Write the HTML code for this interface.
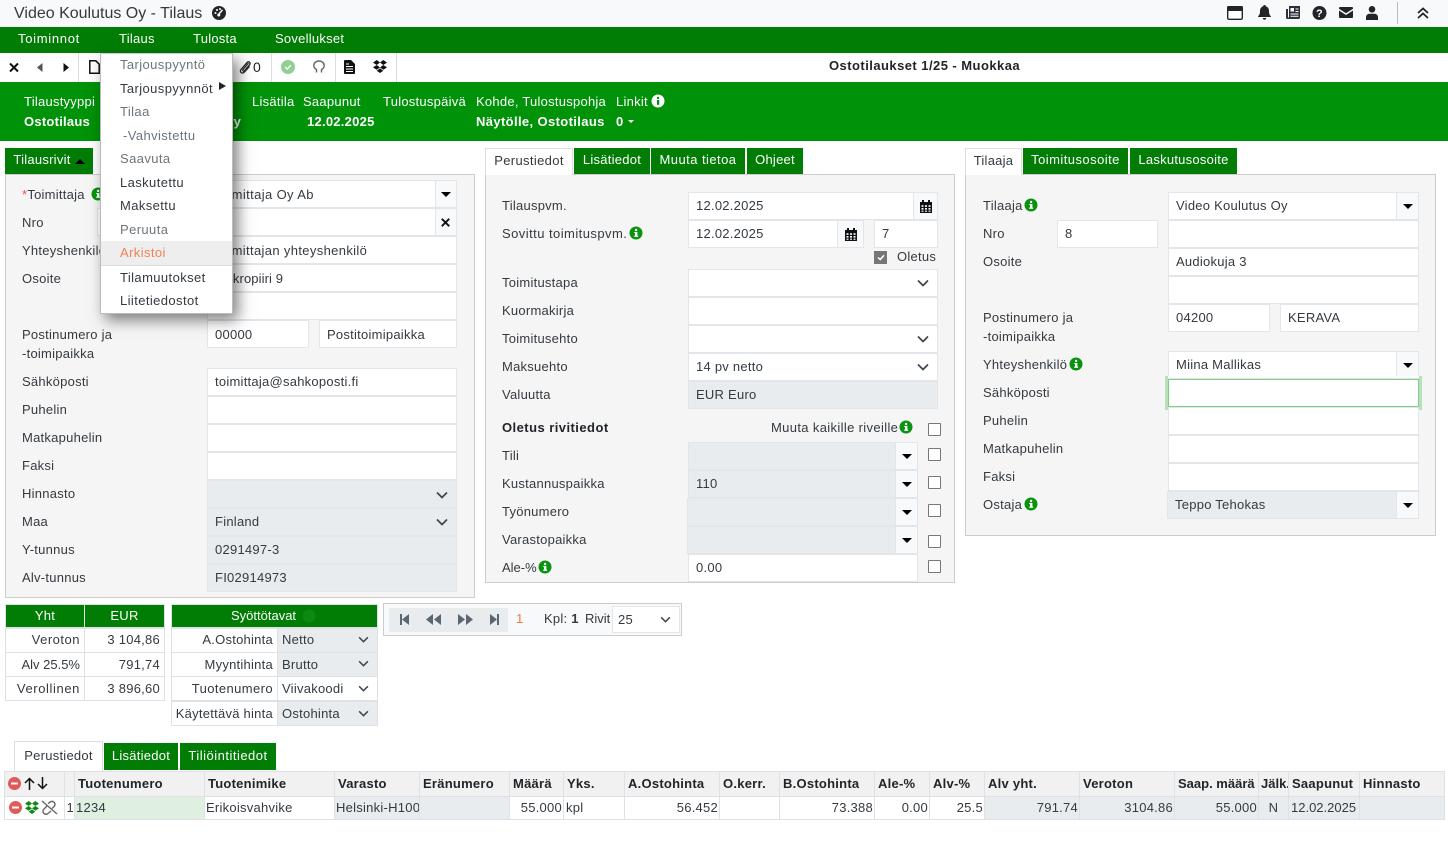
<!DOCTYPE html>
<html lang="fi"><head><meta charset="utf-8"><title>Video Koulutus Oy - Tilaus</title>
<style>
html,body{margin:0;padding:0;width:1448px;height:861px;overflow:hidden;background:#fff}
body{font-family:"Liberation Sans","DejaVu Sans",sans-serif;font-size:13px;letter-spacing:.25px;color:#343a40;position:relative}
.a,.t,.f,.g,.b,.p,.tab{position:absolute;box-sizing:border-box}
.t{line-height:18px;white-space:nowrap}
.t:not(.w){margin-top:1px}
.w{color:#fff}.bd{font-weight:bold}
.f,.g{background:#fff;border:1px solid #e2e5e9;height:28px;line-height:26px;padding-left:7px;white-space:nowrap;overflow:hidden}
.g{background:#e9ecef}
.b{background:#f8f9fa;border:1px solid #e2e5e9;height:28px}
.b i{position:absolute;left:50%;top:50%;margin:-2px 0 0 -5px;border:5px solid transparent;border-top:5px solid #000;border-bottom:0}
.p{background:#f5f5f5;border:1px solid #ccc}
.tab{height:26px;line-height:24px;text-align:center;background:#017d06;color:#fff;top:148px}
.tab.on{background:#fff;color:#343a40;border:1px solid #ddd;border-bottom:0;height:27px}
svg{position:absolute;overflow:visible}
.cb{position:absolute;width:13px;height:13px;border:1px solid #777;background:#fff;box-sizing:border-box;border-radius:1px}
.m{position:absolute;left:120px;margin-top:1px;line-height:18px;white-space:nowrap;color:#6c757d;letter-spacing:.4px}
.m.k{color:#343a40}
.c{position:absolute;box-sizing:border-box;border:1px solid #dee2e6;height:25px;line-height:23px;padding:0 4px;white-space:nowrap;background:#fff;overflow:hidden}
.r{text-align:right}
.h{background:#017d06;color:#fff;text-align:center;height:24px;line-height:21px}
.hd{background:#f1f1f1;font-weight:bold;top:771px;height:26px;line-height:24px;color:#212529;padding:0 3px}
.rw{top:796px;height:24px;line-height:22px;color:#343a40;padding:0 1px}
.gg{background:#e9ecef}
</style></head><body>
<svg width="0" height="0" style="position:absolute"><defs>
<symbol id="inf" viewBox="0 0 14 14"><circle cx="7" cy="7" r="6.5" fill="#0a930f"/><rect x="6" y="6" width="2.4" height="4.6" fill="#fff"/><rect x="5.2" y="9.6" width="3.9" height="1.2" fill="#fff"/><rect x="5.2" y="6" width="2" height="1" fill="#fff"/><circle cx="7.1" cy="4" r="1.2" fill="#fff"/></symbol>
<symbol id="chev" viewBox="0 0 12 8"><path d="M1 1.5 6 6.5 11 1.5" fill="none" stroke="#3f464d" stroke-width="1.7"/></symbol>
<symbol id="cal" viewBox="0 0 12 13"><path d="M0 2h2V0h2v2h4V0h2v2h2v11H0z" fill="#111"/><path d="M1.5 5.3h2v1.6h-2zM5 5.3h2v1.6H5zM8.500 5.300h2v1.600h-2zM1.500 8h2v1.600h-2zM5 8h2v1.600H5zM8.500 8h2v1.600h-2zM1.500 10.600h2v1.200h-2zM5 10.600h2v1.200H5zM8.500 10.600h2v1.200h-2z" fill="#fff"/></symbol>
<symbol id="drop" viewBox="0 0 14 13"><path d="M3.700 0 7 2.500 3.700 5 0 2.600zM10.300 0 14 2.600 10.300 5 7 2.500zM0 7.400 3.700 5 7 7.400 3.700 9.800zM14 7.400 10.300 9.800 7 7.400 10.300 5zM3.700 10.700 7 8.400l3.300 2.300-3.300 2.300z"/></symbol>
</defs></svg>

<!-- Title bar -->
<div class="a" style="left:0;top:0;width:1448px;height:27px;background:#f8f9fa"></div>
<div class="t" style="left:14px;top:2px;font-size:16px;line-height:21px;letter-spacing:0;color:#343a40">Video Koulutus Oy - Tilaus</div>
<svg style="left:212px;top:6px" width="14" height="14" viewBox="0 0 14 14"><circle cx="7" cy="7" r="7" fill="#212529"/><path d="M7 8 10.500 3.800" stroke="#fff" stroke-width="1.500"/><circle cx="3.500" cy="7" r="1" fill="#fff"/><circle cx="5" cy="4" r="1" fill="#fff"/><circle cx="8" cy="3" r="1" fill="#fff"/><circle cx="6.800" cy="9" r="1.500" fill="#fff"/></svg>
<svg style="left:1227px;top:6px" width="16" height="14" viewBox="0 0 16 14"><rect x=".7" y=".7" width="14.600" height="12.600" rx="1.500" fill="#fff" stroke="#212529" stroke-width="1.400"/><rect x="0" y="0" width="16" height="5" rx="1.500" fill="#212529"/></svg>
<svg style="left:1258px;top:5px" width="13" height="15" viewBox="0 0 13 15"><path d="M6.500 0c1 0 1.300.7 1.300 1.400C10 2 11 3.800 11 6c0 3 .8 4.300 2 5.500V12H0v-.5C1.200 10.300 2 9 2 6c0-2.200 1-4 3.200-4.600C5.200.7 5.500 0 6.500 0z" fill="#212529"/><path d="M4.800 13h3.400a1.700 1.700 0 0 1-3.400 0z" fill="#212529"/></svg>
<svg style="left:1286px;top:6px" width="14" height="13" viewBox="0 0 14 13"><path d="M3 0h11v11.500a1.500 1.500 0 0 1-1.500 1.500H1.500A1.500 1.500 0 0 1 0 11.500V3h2v8.500h1z" fill="#2b3138"/><path d="M4.500 2h3.500v3.500H4.500zM9.500 2.500H12.500V3.500H9.500zM9.500 5H12.500V6H9.500zM4.500 7.500H12.500V8.500H4.500zM4.500 9.800H12.500V10.800H4.500z" fill="#fff"/></svg>
<svg style="left:1312px;top:6px" width="15" height="14" viewBox="0 0 15 14"><circle cx="7.500" cy="7" r="7" fill="#212529"/><text x="7.500" y="11" font-family="Liberation Sans" font-size="11" font-weight="bold" text-anchor="middle" fill="#fff">?</text></svg>
<svg style="left:1339px;top:7px" width="14" height="11" viewBox="0 0 14 11"><path d="M1 0h12a1 1 0 0 1 1 1v.8L7 6.300 0 1.800V1a1 1 0 0 1 1-1zM0 3.500 7 8l7-4.500V10a1 1 0 0 1-1 1H1a1 1 0 0 1-1-1z" fill="#212529"/></svg>
<svg style="left:1366px;top:6px" width="12" height="14" viewBox="0 0 12 14"><circle cx="6" cy="3.300" r="3.300" fill="#212529"/><path d="M0 14v-2.500C0 9 2 7.800 3.500 7.800h5C10 7.800 12 9 12 11.500V14z" fill="#212529"/></svg>
<div class="a" style="left:1397px;top:2px;width:1px;height:22px;background:#bbb"></div>
<svg style="left:1417px;top:7px" width="12" height="12" viewBox="0 0 12 12"><path d="M1 6 6 1.500 11 6M1 11 6 6.500 11 11" fill="none" stroke="#212529" stroke-width="1.800"/></svg>

<!-- Menu bar -->
<div class="a" style="left:0;top:27px;width:1448px;height:26px;background:#017d06"></div>
<div class="t w" style="left:18px;top:30px;letter-spacing:.7px">Toiminnot</div>
<div class="t w" style="left:119px;top:30px">Tilaus</div>
<div class="t w" style="left:193px;top:30px">Tulosta</div>
<div class="t w" style="left:275px;top:30px">Sovellukset</div>

<!-- Toolbar -->
<div class="a" style="left:0;top:53px;width:397px;height:29px;border-right:1px solid #ddd;box-sizing:border-box"></div>
<div class="a" style="left:78px;top:53px;width:1px;height:29px;background:#ddd"></div>
<div class="a" style="left:271px;top:53px;width:1px;height:29px;background:#ddd"></div>
<div class="a" style="left:335px;top:53px;width:1px;height:29px;background:#ddd"></div>
<svg style="left:9px;top:63px" width="10" height="9" viewBox="0 0 10 9"><path d="M1 .5 9 8.500M9 .5 1 8.500" stroke="#111" stroke-width="2"/></svg>
<svg style="left:37px;top:63px" width="6" height="9" viewBox="0 0 6 9"><path d="M5.500 0v9L0 4.500z" fill="#555"/></svg>
<svg style="left:63px;top:63px" width="6" height="9" viewBox="0 0 6 9"><path d="M.5 0v9L6 4.500z" fill="#111"/></svg>
<svg style="left:89px;top:60px" width="11" height="14" viewBox="0 0 11 14"><path d="M.8.8h6l3.400 3.400v9H.8z" fill="#fff" stroke="#111" stroke-width="1.500"/></svg>
<svg style="left:239px;top:60px" width="12" height="14" viewBox="0 0 12 14"><path d="M9.500 3.500 4 10c-1 1.200 .6 2.300 1.600 1.200l5-6C12 3.500 9.800 1 8 3L2 10c-2 2.500 1.500 5 3.500 2.500L10.500 7" fill="none" stroke="#222" stroke-width="1.300" transform="translate(0 -.5)"/></svg>
<div class="t" style="left:253px;top:57px;color:#222;font-size:14px">0</div>
<svg style="left:281px;top:60px" width="14" height="14" viewBox="0 0 14 14"><circle cx="7" cy="7" r="7" fill="#8fd095"/><path d="M4.300 7.200 6.200 9 9.800 5.300" fill="none" stroke="#fff" stroke-width="1.500"/></svg>
<svg style="left:313px;top:60px" width="12" height="14" viewBox="0 0 12 14"><path d="M3.500 12.500V9.500C1.500 8.500 .8 7 .8 5.500.8 3 3 1 6 1s5.200 2 5.200 4.500c0 1.500-.7 3-2.700 4v3" fill="none" stroke="#666" stroke-width="1.400"/></svg>
<svg style="left:344px;top:60px" width="11" height="14" viewBox="0 0 11 14"><path d="M0 1a1 1 0 0 1 1-1h6l4 4v9a1 1 0 0 1-1 1H1a1 1 0 0 1-1-1z" fill="#111"/><path d="M2 6h7v1H2zM2 8.500h7v1H2zM2 11h7v1H2zM2 3.500h3v1H2z" fill="#fff"/></svg>
<svg style="left:373px;top:60px" width="14" height="13"><use href="#drop" width="14" height="13" fill="#111"/></svg>
<div class="t bd" style="left:829px;top:56px;width:200px;color:#212529;letter-spacing:.45px">Ostotilaukset 1/25 - Muokkaa</div>

<!-- Green header -->
<div class="a" style="left:0;top:82px;width:1448px;height:59px;background:#009208"></div>
<div class="t w" style="left:24px;top:93px">Tilaustyyppi</div>
<div class="t w bd" style="left:24px;top:113px">Ostotilaus</div>
<div class="t w bd" style="left:229px;top:113px">ty</div>
<div class="t w" style="left:252px;top:93px">Lisätila</div>
<div class="t w" style="left:303px;top:93px">Saapunut</div>
<div class="t w bd" style="left:307px;top:113px">12.02.2025</div>
<div class="t w" style="left:383px;top:93px">Tulostuspäivä</div>
<div class="t w" style="left:476px;top:93px">Kohde, Tulostuspohja</div>
<div class="t w bd" style="left:476px;top:113px;letter-spacing:.37px">Näytölle, Ostotilaus</div>
<div class="t w" style="left:616px;top:93px">Linkit</div>
<svg style="left:651px;top:94px" width="14" height="14" viewBox="0 0 14 14"><circle cx="7" cy="7" r="6.500" fill="#fff"/><rect x="6" y="6" width="2.200" height="4.800" fill="#009208"/><circle cx="7.100" cy="4" r="1.200" fill="#009208"/></svg>
<div class="t w bd" style="left:616px;top:113px">0</div>
<div class="a" style="left:628px;top:120px;border:3px solid transparent;border-top:3px solid #fff;border-bottom:0"></div>

<!-- Panel 1 -->
<div class="p" style="left:5px;top:174px;width:470px;height:424px"></div>
<div class="tab" style="left:5px;width:88px;padding-right:14px">Tilausrivit</div>
<div class="a" style="left:75px;top:159px;border:5px solid transparent;border-bottom:5px solid #000;border-top:0"></div>
<div class="t" style="left:22px;top:185px"><span style="color:#e0524d">*</span>Toimittaja</div>
<svg style="left:91px;top:187px" width="14" height="14"><use href="#inf" width="14" height="14"/></svg>
<div class="t" style="left:22px;top:213px">Nro</div>
<div class="t" style="left:22px;top:241px">Yhteyshenkilö</div>
<div class="t" style="left:22px;top:269px">Osoite</div>
<div class="t" style="left:22px;top:325px">Postinumero ja</div>
<div class="t" style="left:22px;top:344px">-toimipaikka</div>
<div class="t" style="left:22px;top:372px">Sähköposti</div>
<div class="t" style="left:22px;top:400px">Puhelin</div>
<div class="t" style="left:22px;top:428px">Matkapuhelin</div>
<div class="t" style="left:22px;top:456px">Faksi</div>
<div class="t" style="left:22px;top:484px">Hinnasto</div>
<div class="t" style="left:22px;top:512px">Maa</div>
<div class="t" style="left:22px;top:540px">Y-tunnus</div>
<div class="t" style="left:22px;top:568px">Alv-tunnus</div>

<div class="f" style="left:207px;top:180px;width:229px;line-height:28px"><span style="letter-spacing:0">Toi</span><span style="letter-spacing:.38px">mittaja Oy Ab</span></div><div class="b" style="left:435px;top:180px;width:22px"><i></i></div>
<div class="f" style="left:97px;top:208px;width:110px"></div>
<div class="f" style="left:207px;top:208px;width:229px"></div><div class="b" style="left:435px;top:208px;width:22px"><svg style="left:5px;top:9px" width="9" height="9" viewBox="0 0 9 9"><path d="M.8.8 8.200 8.200M8.200.8.800 8.200" stroke="#111" stroke-width="1.900"/></svg></div>
<div class="f" style="left:207px;top:236px;width:250px;line-height:28px"><span style="letter-spacing:0">Toi</span><span style="letter-spacing:.35px">mittajan yhteyshenkilö</span></div>
<div class="f" style="left:207px;top:264px;width:250px;line-height:28px"><span style="letter-spacing:2.1px">Mi</span><span style="letter-spacing:.1px">kropiiri 9</span></div>
<div class="f" style="left:207px;top:292px;width:250px"></div>
<div class="f" style="left:207px;top:320px;width:102px;line-height:28px">00000</div>
<div class="f" style="left:319px;top:320px;width:138px;line-height:28px">Postitoimipaikka</div>
<div class="f" style="left:207px;top:368px;width:250px">toimittaja@sahkoposti.fi</div>
<div class="f" style="left:207px;top:396px;width:250px"></div>
<div class="f" style="left:207px;top:424px;width:250px"></div>
<div class="f" style="left:207px;top:452px;width:250px"></div>
<div class="g" style="left:207px;top:480px;width:250px"></div>
<div class="g" style="left:207px;top:508px;width:250px">Finland</div>
<div class="g" style="left:207px;top:536px;width:250px">0291497-3</div>
<div class="g" style="left:207px;top:564px;width:250px">FI02914973</div>
<svg style="left:436px;top:491px" width="12" height="8"><use href="#chev" width="12" height="8"/></svg>
<svg style="left:436px;top:518px" width="12" height="8"><use href="#chev" width="12" height="8"/></svg>

<!-- Panel 2 -->
<div class="p" style="left:485px;top:174px;width:470px;height:409px"></div>
<div class="tab on" style="left:485px;width:88px;letter-spacing:.35px">Perustiedot</div>
<div class="tab" style="left:574px;width:76px">Lisätiedot</div>
<div class="tab" style="left:651px;width:94px;letter-spacing:.45px">Muuta tietoa</div>
<div class="tab" style="left:747px;width:56px">Ohjeet</div>
<div class="t" style="left:502px;top:196px">Tilauspvm.</div>
<div class="t" style="left:502px;top:224px;letter-spacing:.45px">Sovittu toimituspvm.</div>
<svg style="left:629px;top:226px" width="14" height="14"><use href="#inf" width="14" height="14"/></svg>
<div class="t" style="left:502px;top:273px">Toimitustapa</div>
<div class="t" style="left:502px;top:301px">Kuormakirja</div>
<div class="t" style="left:502px;top:329px">Toimitusehto</div>
<div class="t" style="left:502px;top:357px">Maksuehto</div>
<div class="t" style="left:502px;top:385px">Valuutta</div>
<div class="t bd" style="left:502px;top:418px;color:#212529;letter-spacing:.45px">Oletus rivitiedot</div>
<div class="t" style="left:771px;top:418px;letter-spacing:.35px">Muuta kaikille riveille</div>
<svg style="left:899px;top:420px" width="14" height="14"><use href="#inf" width="14" height="14"/></svg>
<div class="t" style="left:502px;top:446px">Tili</div>
<div class="t" style="left:502px;top:474px">Kustannuspaikka</div>
<div class="t" style="left:502px;top:502px">Työnumero</div>
<div class="t" style="left:502px;top:530px">Varastopaikka</div>
<div class="t" style="left:502px;top:558px;letter-spacing:0">Ale-%</div>
<svg style="left:538px;top:560px" width="14" height="14"><use href="#inf" width="14" height="14"/></svg>

<div class="f" style="left:688px;top:192px;width:226px">12.02.2025</div><div class="b" style="left:913px;top:192px;width:25px"><svg style="left:6px;top:7px" width="12" height="13"><use href="#cal" width="12" height="13"/></svg></div>
<div class="f" style="left:688px;top:220px;width:150px">12.02.2025</div><div class="b" style="left:837px;top:220px;width:27px"><svg style="left:7px;top:7px" width="12" height="13"><use href="#cal" width="12" height="13"/></svg></div>
<div class="f" style="left:874px;top:220px;width:64px">7</div>
<div class="a" style="left:874px;top:251px;width:13px;height:13px;background:#777"></div>
<svg style="left:877px;top:254px" width="8" height="7" viewBox="0 0 8 7"><path d="M1 3.500 3.200 5.500 7 1.200" fill="none" stroke="#fff" stroke-width="1.500"/></svg>
<div class="t" style="left:897px;top:247px">Oletus</div>
<div class="f" style="left:688px;top:269px;width:250px"></div><svg style="left:917px;top:279px" width="12" height="8"><use href="#chev" width="12" height="8"/></svg>
<div class="f" style="left:688px;top:297px;width:250px"></div>
<div class="f" style="left:688px;top:325px;width:250px"></div><svg style="left:917px;top:335px" width="12" height="8"><use href="#chev" width="12" height="8"/></svg>
<div class="f" style="left:688px;top:353px;width:250px">14 pv netto</div><svg style="left:917px;top:363px" width="12" height="8"><use href="#chev" width="12" height="8"/></svg>
<div class="g" style="left:688px;top:381px;width:250px">EUR Euro</div>
<div class="g" style="left:688px;top:442px;width:208px"></div><div class="b" style="left:895px;top:442px;width:23px"><i></i></div>
<div class="g" style="left:688px;top:470px;width:208px">110</div><div class="b" style="left:895px;top:470px;width:23px"><i></i></div>
<div class="g" style="left:687px;top:498px;width:209px"></div><div class="b" style="left:895px;top:498px;width:23px"><i></i></div>
<div class="g" style="left:687px;top:526px;width:209px"></div><div class="b" style="left:895px;top:526px;width:23px"><i></i></div>
<div class="f" style="left:688px;top:554px;width:230px">0.00</div>
<div class="cb" style="left:928px;top:423px"></div>
<div class="cb" style="left:928px;top:448px"></div>
<div class="cb" style="left:928px;top:476px"></div>
<div class="cb" style="left:928px;top:504px"></div>
<div class="cb" style="left:928px;top:535px"></div>
<div class="cb" style="left:928px;top:560px"></div>

<!-- Panel 3 -->
<div class="p" style="left:965px;top:174px;width:471px;height:362px"></div>
<div class="tab on" style="left:965px;width:57px">Tilaaja</div>
<div class="tab" style="left:1023px;width:105px;letter-spacing:.45px">Toimitusosoite</div>
<div class="tab" style="left:1130px;width:107px">Laskutusosoite</div>
<div class="t" style="left:983px;top:196px">Tilaaja</div>
<svg style="left:1024px;top:198px" width="14" height="14"><use href="#inf" width="14" height="14"/></svg>
<div class="t" style="left:983px;top:224px">Nro</div>
<div class="t" style="left:983px;top:252px">Osoite</div>
<div class="t" style="left:983px;top:308px">Postinumero ja</div>
<div class="t" style="left:983px;top:327px">-toimipaikka</div>
<div class="t" style="left:983px;top:355px">Yhteyshenkilö</div>
<svg style="left:1069px;top:357px" width="14" height="14"><use href="#inf" width="14" height="14"/></svg>
<div class="t" style="left:983px;top:383px">Sähköposti</div>
<div class="t" style="left:983px;top:411px">Puhelin</div>
<div class="t" style="left:983px;top:439px">Matkapuhelin</div>
<div class="t" style="left:983px;top:467px">Faksi</div>
<div class="t" style="left:983px;top:495px">Ostaja</div>
<svg style="left:1024px;top:497px" width="14" height="14"><use href="#inf" width="14" height="14"/></svg>

<div class="f" style="left:1168px;top:192px;width:229px">Video Koulutus Oy</div><div class="b" style="left:1396px;top:192px;width:23px"><i></i></div>
<div class="f" style="left:1057px;top:220px;width:101px">8</div>
<div class="f" style="left:1168px;top:220px;width:251px"></div>
<div class="f" style="left:1168px;top:248px;width:251px">Audiokuja 3</div>
<div class="f" style="left:1168px;top:276px;width:251px"></div>
<div class="f" style="left:1168px;top:304px;width:102px">04200</div>
<div class="f" style="left:1280px;top:304px;width:139px">KERAVA</div>
<div class="f" style="left:1168px;top:351px;width:229px">Miina Mallikas</div><div class="b" style="left:1396px;top:351px;width:23px"><i></i></div>
<div class="a" style="left:1165px;top:376px;width:257px;height:34px;background:#b9dfbb"></div>
<div class="f" style="left:1168px;top:379px;width:251px;border-color:#7fce85"></div>
<div class="a" style="left:1168px;top:376px;width:251px;height:3px;background:#fff;border-bottom:1px solid #e2e5e9;box-sizing:border-box"></div>
<div class="f" style="left:1168px;top:407px;width:251px"></div>
<div class="f" style="left:1168px;top:435px;width:251px"></div>
<div class="f" style="left:1168px;top:463px;width:251px"></div>
<div class="g" style="left:1167px;top:491px;width:230px">Teppo Tehokas</div><div class="b" style="left:1396px;top:491px;width:23px"><i></i></div>

<!-- Totals -->
<div class="c h" style="left:5px;top:604px;width:80px">Yht</div>
<div class="c h" style="left:84px;top:604px;width:81px">EUR</div>
<div class="c r" style="left:5px;top:628px;width:80px;line-height:21px;letter-spacing:.5px">Veroton</div><div class="c r" style="left:84px;top:628px;width:81px;line-height:21px">3 104,86</div>
<div class="c r" style="left:5px;top:652px;width:80px;letter-spacing:0">Alv 25.5%</div><div class="c r" style="left:84px;top:652px;width:81px">791,74</div>
<div class="c r" style="left:5px;top:676px;width:80px;letter-spacing:.6px">Verollinen</div><div class="c r" style="left:84px;top:676px;width:81px">3 896,60</div>

<div class="c h" style="left:171px;top:604px;width:207px;text-align:left;padding-left:59px;letter-spacing:0">Syöttötavat</div>
<svg style="left:302px;top:609px" width="14" height="14" viewBox="0 0 14 14"><circle cx="7" cy="7" r="6.500" fill="#0a8a0f"/></svg>
<div class="c r" style="left:171px;top:628px;width:107px;line-height:21px">A.Ostohinta</div><div class="c gg" style="left:277px;top:628px;width:101px;line-height:21px">Netto</div>
<div class="c r" style="left:171px;top:652px;width:107px">Myyntihinta</div><div class="c gg" style="left:277px;top:652px;width:101px">Brutto</div>
<div class="c r" style="left:171px;top:676px;width:107px;letter-spacing:.4px">Tuotenumero</div><div class="c" style="left:277px;top:676px;width:101px">Viivakoodi</div>
<div class="c r" style="left:171px;top:701px;width:107px;padding:0 4px 0 0">Käytettävä hinta</div><div class="c gg" style="left:277px;top:701px;width:101px">Ostohinta</div>
<svg style="left:358px;top:636px" width="11" height="7"><use href="#chev" width="11" height="7"/></svg>
<svg style="left:358px;top:660px" width="11" height="7"><use href="#chev" width="11" height="7"/></svg>
<svg style="left:358px;top:685px" width="11" height="7"><use href="#chev" width="11" height="7"/></svg>
<svg style="left:358px;top:710px" width="11" height="7"><use href="#chev" width="11" height="7"/></svg>

<!-- Pager -->
<div class="a" style="left:383px;top:603px;width:299px;height:33px;background:#f8f9fa;border:1px solid #ccc;box-sizing:border-box"></div>
<div class="a" style="left:389px;top:608px;width:119px;height:24px;background:#e9ecef"></div>
<svg style="left:400px;top:614px" width="9" height="11" viewBox="0 0 9 11"><path d="M0 0h2v11H0zM9 0v11L2 5.500z" fill="#5b6670"/></svg>
<svg style="left:426px;top:614px" width="15" height="11" viewBox="0 0 15 11"><path d="M7 0v11L0 5.500zM15 0v11L8 5.500z" fill="#5b6670"/></svg>
<svg style="left:458px;top:614px" width="15" height="11" viewBox="0 0 15 11"><path d="M0 0v11l7-5.500zM8 0v11l7-5.500z" fill="#5b6670"/></svg>
<svg style="left:490px;top:614px" width="9" height="11" viewBox="0 0 9 11"><path d="M9 0H7v11h2zM0 0v11l7-5.500z" fill="#5b6670"/></svg>
<div class="t" style="left:516px;top:609px;color:#f27a3d">1</div>
<div class="t" style="left:544px;top:609px;">Kpl: <b>1</b></div>
<div class="t" style="left:585px;top:609px;letter-spacing:0">Rivit</div>
<div class="f" style="left:612px;top:606px;width:68px;height:27px;line-height:25px;padding-left:5px">25</div>
<svg style="left:660px;top:616px" width="11" height="7"><use href="#chev" width="11" height="7"/></svg>

<!-- Bottom tabs -->
<div class="tab on" style="left:14px;top:741px;width:89px;height:30px;line-height:28px">Perustiedot</div>
<div class="tab" style="left:104px;top:743px;width:74px;height:27px;line-height:25px">Lisätiedot</div>
<div class="tab" style="left:180px;top:743px;width:96px;height:27px;line-height:25px;letter-spacing:.5px">Tiliöintitiedot</div>

<!-- Table -->
<div class="c hd" style="left:4px;width:61px"></div>
<div class="c hd" style="left:64px;width:11px"></div>
<div class="c hd" style="left:74px;width:131px">Tuotenumero</div>
<div class="c hd" style="left:204px;width:131px">Tuotenimike</div>
<div class="c hd" style="left:334px;width:86px">Varasto</div>
<div class="c hd" style="left:419px;width:91px">Eränumero</div>
<div class="c hd" style="left:509px;width:55px">Määrä</div>
<div class="c hd" style="left:563px;width:62px">Yks.</div>
<div class="c hd" style="left:624px;width:96px">A.Ostohinta</div>
<div class="c hd" style="left:719px;width:61px">O.kerr.</div>
<div class="c hd" style="left:779px;width:96px">B.Ostohinta</div>
<div class="c hd" style="left:874px;width:56px">Ale-%</div>
<div class="c hd" style="left:929px;width:56px">Alv-%</div>
<div class="c hd" style="left:984px;width:96px">Alv yht.</div>
<div class="c hd" style="left:1079px;width:96px">Veroton</div>
<div class="c hd" style="left:1174px;width:85px;letter-spacing:0">Saap. määrä</div>
<div class="c hd" style="left:1258px;width:31px;padding:0 2px;letter-spacing:0">Jälk.</div>
<div class="c hd" style="left:1288px;width:72px">Saapunut</div>
<div class="c hd" style="left:1359px;width:86px">Hinnasto</div>

<svg style="left:8px;top:777px" width="13" height="13" viewBox="0 0 13 13"><circle cx="6.500" cy="6.500" r="6.500" fill="#e05a5a"/><rect x="3" y="5.500" width="7" height="2" fill="#fff"/></svg>
<svg style="left:24px;top:777px" width="11" height="13" viewBox="0 0 11 13"><path d="M5.500 13V1.500M1 6l4.500-4.500L10 6" fill="none" stroke="#111" stroke-width="1.500"/></svg>
<svg style="left:37px;top:777px" width="11" height="13" viewBox="0 0 11 13"><path d="M5.500 0v11.500M1 7l4.500 4.500L10 7" fill="none" stroke="#111" stroke-width="1.500"/></svg>

<div class="c rw" style="left:4px;width:61px"></div>
<div class="c rw r" style="left:64px;width:11px;padding:0">1</div>
<div class="c rw" style="left:74px;width:131px;background:#dff0e0">1234</div>
<div class="c rw" style="left:204px;width:131px">Erikoisvahvike</div>
<div class="c rw gg" style="left:334px;width:86px">Helsinki-H100</div>
<div class="c rw gg" style="left:419px;width:91px"></div>
<div class="c rw r" style="left:509px;width:55px">55.000</div>
<div class="c rw" style="left:563px;width:62px;padding-left:2px">kpl</div>
<div class="c rw r" style="left:624px;width:96px">56.452</div>
<div class="c rw" style="left:719px;width:61px"></div>
<div class="c rw r" style="left:779px;width:96px">73.388</div>
<div class="c rw r" style="left:874px;width:56px">0.00</div>
<div class="c rw r" style="left:929px;width:56px">25.5</div>
<div class="c rw r gg" style="left:984px;width:96px">791.74</div>
<div class="c rw r gg" style="left:1079px;width:96px">3104.86</div>
<div class="c rw r gg" style="left:1174px;width:85px">55.000</div>
<div class="c rw gg" style="left:1258px;width:31px;text-align:center">N</div>
<div class="c rw gg" style="left:1288px;width:72px;letter-spacing:0;padding-left:2px">12.02.2025</div>
<div class="c rw gg" style="left:1359px;width:86px"></div>

<svg style="left:9px;top:801px" width="13" height="13" viewBox="0 0 13 13"><circle cx="6.500" cy="6.500" r="6.500" fill="#e05a5a"/><rect x="3" y="5.500" width="7" height="2" fill="#fff"/></svg>
<svg style="left:25px;top:801px" width="14" height="13"><use href="#drop" width="14" height="13" fill="#0a8a0f"/></svg>
<svg style="left:41px;top:800px" width="17" height="15" viewBox="0 0 17 15"><path d="M1 1l15 13" stroke="#666" stroke-width="1.400"/><path d="M7 3.500 9.500 1.800a3 3 0 0 1 4 4.200L11 8.500M6 6 3 9a3 3 0 0 0 4 4.500L10 11" fill="none" stroke="#666" stroke-width="1.400"/></svg>

<!-- Dropdown menu -->
<div class="a" style="left:100px;top:53px;width:133px;height:261px;background:#fff;border:1px solid #bbb;border-top:1px solid #ccc;box-sizing:border-box;box-shadow:5px 6px 14px rgba(0,0,0,.5)"></div>
<div class="a" style="left:101px;top:241px;width:131px;height:24px;background:#eee"></div>
<div class="a" style="left:101px;top:265px;width:131px;height:1px;background:#ddd"></div>
<div class="m" style="top:55px">Tarjouspyyntö</div>
<div class="m k" style="top:79px">Tarjouspyynnöt</div>
<div class="a" style="left:219px;top:82px;border:4px solid transparent;border-left:7px solid #212529;border-right:0"></div>
<div class="m" style="top:102px">Tilaa</div>
<div class="m" style="top:126px;left:123px">-Vahvistettu</div>
<div class="m" style="top:149px">Saavuta</div>
<div class="m k" style="top:173px">Laskutettu</div>
<div class="m k" style="top:196px">Maksettu</div>
<div class="m" style="top:220px">Peruuta</div>
<div class="m" style="top:243px;color:#ef8354">Arkistoi</div>
<div class="m k" style="top:268px">Tilamuutokset</div>
<div class="m k" style="top:291px">Liitetiedostot</div>
</body></html>
